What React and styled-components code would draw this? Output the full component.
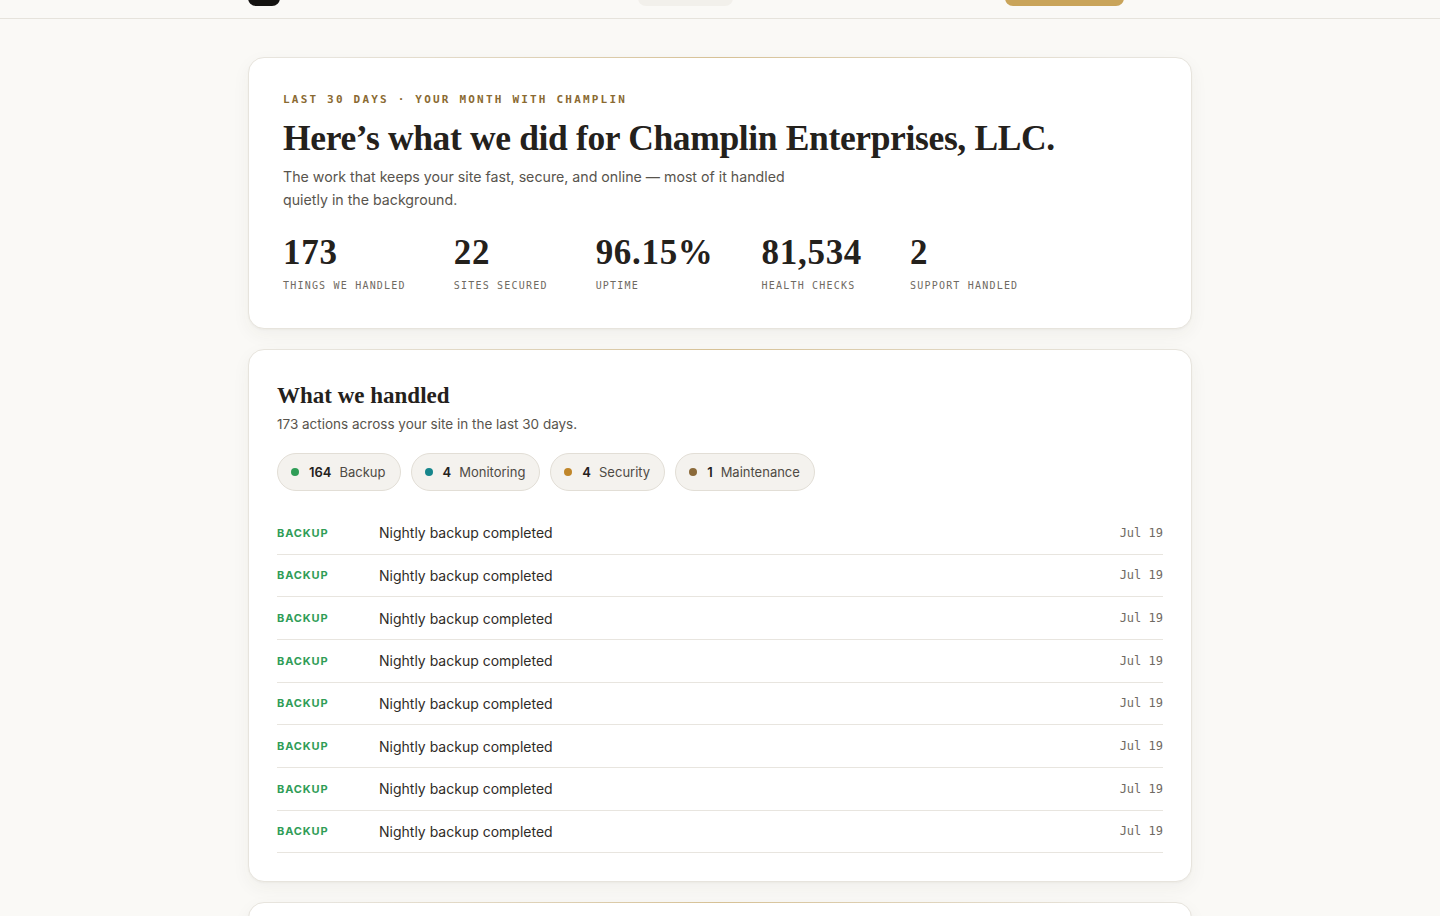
import React from 'react';
import styled, { createGlobalStyle } from 'styled-components';

const GlobalStyle = createGlobalStyle`
  html, body {
    margin: 0;
    padding: 0;
    background: #faf9f6;
    font-family: Inter, "Noto Sans", sans-serif;
    color: #26231e;
  }
  * { box-sizing: border-box; }
`;

const serif = `"Liberation Serif", "DejaVu Serif", serif`;
const mono = `"DejaVu Sans Mono", "Liberation Mono", monospace`;

const TopBar = styled.header`
  height: 19px;
  border-bottom: 1px solid #e6e3dc;
  overflow: hidden;
  display: flex;
  justify-content: center;
`;

const TopBarInner = styled.div`
  width: 944px;
  display: flex;
  align-items: flex-end;
  padding-bottom: 12px;
`;

const Logo = styled.div`
  width: 32px;
  height: 32px;
  border-radius: 8px;
  background: #141311;
`;

const NavPill = styled.div`
  width: 95px;
  height: 32px;
  border-radius: 8px;
  background: #f2f0eb;
  margin-left: 358px;
`;

const CtaButton = styled.div`
  width: 119px;
  height: 32px;
  border-radius: 8px;
  background: #c9a45a;
  margin-left: 272px;
`;

const Main = styled.main`
  width: 944px;
  margin: 38px auto 0;
  display: flex;
  flex-direction: column;
  gap: 20px;
`;

const Card = styled.section`
  position: relative;
  background: #fff;
  border: 1px solid #e7e4dd;
  border-radius: 16px;
  box-shadow: 0 6px 18px rgba(60, 50, 30, 0.05), 0 1px 2px rgba(60, 50, 30, 0.04);
  padding: ${p => p.$pad};

  &::before {
    content: '';
    position: absolute;
    top: -1px;
    left: 80px;
    right: 80px;
    height: 1px;
    background: linear-gradient(90deg, rgba(201, 164, 90, 0), rgba(201, 164, 90, 0.55), rgba(201, 164, 90, 0));
  }
`;

const Eyebrow = styled.div`
  font-family: ${mono};
  font-size: 11px;
  letter-spacing: 0.2em;
  text-transform: uppercase;
  color: #8a6a32;
  font-weight: 700;
`;

const Headline = styled.h1`
  margin: 12px 0 0;
  font-family: ${serif};
  font-size: 35.5px;
  font-weight: 700;
  line-height: 1.15;
  letter-spacing: -0.01em;
  color: #24211c;
`;

const Lede = styled.p`
  margin: 6px 0 0;
  max-width: 520px;
  font-size: 14.2px;
  line-height: 23px;
  color: #58544d;
`;

const Stats = styled.div`
  display: flex;
  gap: 48px;
  margin-top: 22px;
`;

const Stat = styled.div`
  display: flex;
  flex-direction: column;
`;

const StatValue = styled.div`
  font-family: ${serif};
  font-size: 35px;
  font-weight: 700;
  line-height: 40px;
  letter-spacing: 0.02em;
  color: #24211c;
`;

const StatLabel = styled.div`
  margin-top: 7px;
  font-family: ${mono};
  font-size: 10px;
  letter-spacing: 0.12em;
  text-transform: uppercase;
  color: #6f6a62;
`;

const SectionTitle = styled.h2`
  margin: 0;
  font-family: ${serif};
  font-size: 23px;
  font-weight: 700;
  line-height: 30px;
  color: #24211c;
`;

const SectionSub = styled.p`
  margin: 3px 0 0;
  font-size: 13.5px;
  line-height: 20px;
  color: #58544d;
`;

const Chips = styled.div`
  display: flex;
  gap: 10px;
  margin-top: 19px;
  margin-bottom: 21px;
`;

const Chip = styled.div`
  display: flex;
  align-items: center;
  height: 38px;
  padding: 0 14px 0 13px;
  border-radius: 999px;
  background: #f4f2ee;
  border: 1px solid #e2ded6;
  font-size: 13px;
  color: #4e4a44;
`;

const Dot = styled.span`
  width: 8px;
  height: 8px;
  border-radius: 50%;
  background: ${p => p.$color};
  margin-right: 10px;
`;

const ChipCount = styled.span`
  font-weight: 600;
  color: #24211c;
  margin-right: 8px;
`;

const Row = styled.div`
  display: grid;
  grid-template-columns: 102px 1fr auto;
  align-items: center;
  height: 42.7px;
  border-bottom: 1px solid #e8e5df;
`;

const Kind = styled.span`
  font-size: 11px;
  font-weight: 700;
  letter-spacing: 0.08em;
  text-transform: uppercase;
  color: ${p => p.$color};
`;

const RowText = styled.span`
  font-size: 14px;
  color: #2f2c27;
`;

const RowDate = styled.span`
  font-family: ${mono};
  font-size: 12px;
  color: #6f6a62;
`;

const stats = [
  { value: '173', label: 'Things we handled' },
  { value: '22', label: 'Sites secured' },
  { value: '96.15%', label: 'Uptime' },
  { value: '81,534', label: 'Health checks' },
  { value: '2', label: 'Support handled' },
];

const categories = [
  { count: 164, name: 'Backup', color: '#2f9d57' },
  { count: 4, name: 'Monitoring', color: '#16868c' },
  { count: 4, name: 'Security', color: '#c0862a' },
  { count: 1, name: 'Maintenance', color: '#8b6a3a' },
];

const activity = Array.from({ length: 8 }, () => ({
  kind: 'Backup',
  text: 'Nightly backup completed',
  date: 'Jul 19',
}));

export default function App() {
  return (
    <>
      <GlobalStyle />
      <TopBar>
        <TopBarInner>
          <Logo />
          <NavPill />
          <CtaButton />
        </TopBarInner>
      </TopBar>
      <Main>
        <Card $pad="35px 34px 37px">
          <Eyebrow>Last 30 days · Your month with Champlin</Eyebrow>
          <Headline>Here’s what we did for Champlin Enterprises, LLC.</Headline>
          <Lede>
            The work that keeps your site fast, secure, and online — most of it handled
            quietly in the background.
          </Lede>
          <Stats>
            {stats.map(s => (
              <Stat key={s.label}>
                <StatValue>{s.value}</StatValue>
                <StatLabel>{s.label}</StatLabel>
              </Stat>
            ))}
          </Stats>
        </Card>
        <Card $pad="31px 28px 28px">
          <SectionTitle>What we handled</SectionTitle>
          <SectionSub>173 actions across your site in the last 30 days.</SectionSub>
          <Chips>
            {categories.map(c => (
              <Chip key={c.name}>
                <Dot $color={c.color} />
                <ChipCount>{c.count}</ChipCount>
                {c.name}
              </Chip>
            ))}
          </Chips>
          {activity.map((a, i) => (
            <Row key={i}>
              <Kind $color="#2f9d57">{a.kind}</Kind>
              <RowText>{a.text}</RowText>
              <RowDate>{a.date}</RowDate>
            </Row>
          ))}
        </Card>
        <Card $pad="40px" />
      </Main>
    </>
  );
}
